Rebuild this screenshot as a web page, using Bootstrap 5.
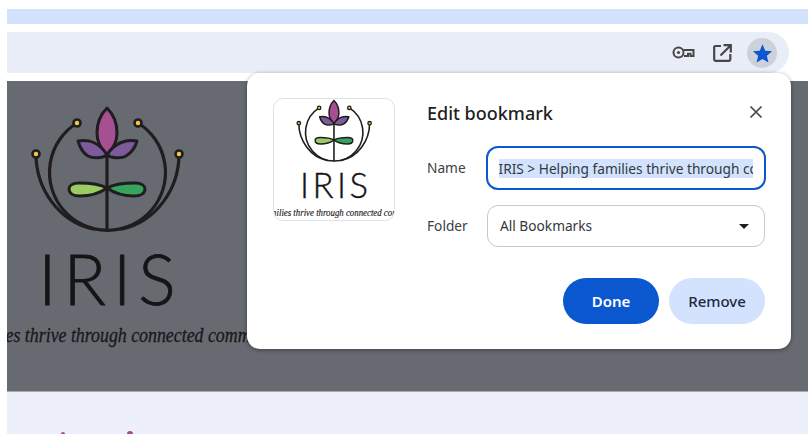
<!DOCTYPE html>
<html lang="en">
<head>
<meta charset="utf-8">
<title>Edit bookmark</title>
<link href="https://cdn.jsdelivr.net/npm/bootstrap@5.3.0/dist/css/bootstrap.min.css" rel="stylesheet">
<style>
html,body{height:441px;overflow:hidden;background:#fff;margin:0}
body{font-family:"Noto Sans","Open Sans",sans-serif;color:#1f1f1f}
.shot{position:relative;width:808px;height:441px;padding:9px 0 0 7px;overflow:hidden}
.tabstrip{height:15px;background:#d3e3fd}
.urlbar{height:41px;margin-top:8px;margin-right:19px;background:#e9edf7;border-radius:0 21px 21px 0;padding-right:12px;gap:18px}
.tool{color:#474747;display:block}
.starbtn{width:30px;height:30px;border-radius:50%;background:#cdd1d9;margin-left:-3px}
.hero{height:311px;margin-top:8px;background:#676a71;border-bottom:1px solid #a9abb0;overflow:hidden}
.hero svg{display:block}
.below{height:42px;background:#edf0fa;overflow:hidden;position:relative}
.inkdot{position:absolute;background:#a8488f;border-radius:2px 2px 0 0}
.inkdot.one{left:54px;top:40px;width:4px;height:2px}
.inkdot.two{left:120px;top:39px;width:6px;height:3px;border-radius:3px 3px 0 0}
.dialog{position:absolute;left:247px;top:73px;width:544px;height:276px;background:#fff;border-radius:13px;box-shadow:0 1px 4px rgba(0,0,0,.4);padding:25px 25px 25px 26px}
.thumb{width:122px;height:123px;border:1px solid #e0e1e4;border-radius:10px;overflow:hidden;flex:none;margin-right:32px}
.thumb svg{display:block}
.dlgtitle{font-size:18px;font-weight:500;line-height:24px;color:#1f1f1f}
.closebtn{width:16px;height:16px;color:#474747;line-height:0;margin-right:1px}
.fieldlabel{width:59px;font-size:13.7px;color:#3c4043;flex:none}
.namebox{width:280px;height:44px;border:2.5px solid #0b57d0;border-radius:12px;padding:0 10.500px;font-size:13.7px;display:flex;align-items:center;overflow:hidden;white-space:nowrap}
.namesel{display:block;width:254px;height:19px;line-height:19px;background:#d3e3fd;overflow:hidden;color:#33383f}
.folderbox{width:278px;height:42px;border:1.5px solid #c7c9cc;border-radius:11px;padding:0 15px 0 12px;font-size:13.7px;color:#33383f;margin-left:1px}
.caret-dn{width:0;height:0;border-left:5px solid transparent;border-right:5px solid transparent;border-top:5px solid #1f1f1f}
.pillbtn{width:96px;height:46px;border-radius:23px;border:0;font-size:15px;font-weight:600;padding:0}
.pillbtn.primary-pill,.pillbtn.primary-pill:hover{background:#0b57d0;color:#fff}
.pillbtn.soft-pill,.pillbtn.soft-pill:hover{background:#d3e3fd;color:#1f2a44;font-weight:500}
.btnrow{margin-top:31px;margin-right:1px;gap:10px}
.titlerow{margin-top:3px;height:24px}
.namerow{margin-top:21px}
.folderrow{margin-top:15px}
</style>
</head>
<body>
<svg width="0" height="0" class="d-block position-absolute">
  <defs>
    <symbol id="lotus" viewBox="0 0 808 441" overflow="visible">
      <g fill="none" stroke="#1f1d1f" stroke-width="3.2" stroke-linecap="round">
        <path d="M77 123A58 58 0 1 0 138 123"/>
        <path d="M36 154C36 190 60 222 93 229"/>
        <path d="M179 154C179 190 155 222 122 229"/>
        <path d="M107 155V230"/>
      </g>
      <g stroke="#1f1d1f" stroke-width="3" stroke-linejoin="round">
        <path fill="#a64f92" d="M107 108C100 115 97 124 97 133C97 143 102 150 107 155C112 150 117 143 117 133C117 124 114 115 107 108Z"/>
        <path fill="#7e5a9c" d="M78 141C89 139 100 143 107 155C103 158 93 159 88 156C83 153 80 148 78 141Z"/>
        <path fill="#7e5a9c" d="M137 141C126 139 114 143 107 155C111 158 121 159 126 156C131 153 135 148 137 141Z"/>
        <path fill="#9ccb64" d="M107 188C100 184 90 183 79 183C72 183 69 186 69 189C69 193 73 196 80 196C90 196 100 193 107 188Z"/>
        <path fill="#38a35e" d="M107 188C114 184 124 183 135 183C142 183 145 186 145 189C145 193 141 196 134 196C124 196 114 193 107 188Z"/>
      </g>
      <g fill="#f4c93f" stroke="#1f1d1f" stroke-width="2.6">
        <circle cx="77" cy="123" r="3.500"/><circle cx="138" cy="123" r="3.500"/>
        <circle cx="36" cy="154" r="3.500"/><circle cx="179" cy="154" r="3.500"/>
      </g>
      <text x="110.500" y="305" text-anchor="middle" font-family="Lato, sans-serif" font-weight="300" font-size="70" letter-spacing="7" stroke="#151416" stroke-width=".8" fill="#151416">IRIS</text>
      <text transform="translate(131 342) scale(.85 1)" text-anchor="middle" font-family="'Liberation Serif', serif" font-style="italic" font-size="21" stroke="#191719" stroke-width=".3" fill="#191719">families thrive through connected communities</text>
    </symbol>
  </defs>
</svg>
<div class="shot">
  <div class="tabstrip"></div>
  <div class="urlbar d-flex align-items-center justify-content-end">
    <svg class="tool" width="23" height="13" viewBox="0 0 23 13" fill="none" stroke="currentColor" stroke-width="2"><circle cx="6.500" cy="6.500" r="5"/><circle cx="6.500" cy="6.500" r="1.600" fill="currentColor" stroke="none"/><path d="M11.500 4H21.500V10H18.500V7.800H16V10H12"/></svg>
    <svg class="tool" width="19" height="18" viewBox="0 0 19 18" fill="none" stroke="currentColor" stroke-width="2.200"><path d="M8 2H2.500A1.300 1.300 0 0 0 1.200 3.300V15.500A1.300 1.300 0 0 0 2.500 16.800H16A1.300 1.300 0 0 0 17.300 15.500V10"/><path d="M7.500 11.500 17.300 1.700M10.500 1.200H17.800V8.500"/></svg>
    <div class="starbtn d-flex align-items-center justify-content-center">
      <svg width="21" height="20" viewBox="0 0 24 23"><path fill="#0b57d0" d="M12 1.500l3.100 7.300 7.900.7-6 5.200 1.800 7.800L12 18.300 5.200 22.500 7 14.700 1 9.500l7.900-.7z"/></svg>
    </div>
  </div>
  <div class="hero">
    <svg width="801" height="310" viewBox="7 81 801 310"><use href="#lotus" width="808" height="441"/></svg>
  </div>
  <div class="below"><span class="inkdot one"></span><span class="inkdot two"></span></div>
  <div class="dialog d-flex">
    <div class="thumb">
      <svg width="120" height="121" viewBox="274 99 120 121"><g transform="translate(281 47) scale(.495)"><use href="#lotus" width="808" height="441"/></g></svg>
    </div>
    <div class="flex-grow-1">
      <div class="d-flex align-items-center justify-content-between titlerow">
        <div class="dlgtitle">Edit bookmark</div>
        <div class="closebtn"><svg width="14" height="14" viewBox="0 0 14 14" stroke="currentColor" stroke-width="1.700"><path d="M1.500 1.500l11 11M12.500 1.500l-11 11"/></svg></div>
      </div>
      <div class="d-flex align-items-center namerow">
        <div class="fieldlabel">Name</div>
        <div class="namebox"><span class="namesel">IRIS &gt; Helping families thrive through connected communities</span></div>
      </div>
      <div class="d-flex align-items-center folderrow">
        <div class="fieldlabel">Folder</div>
        <div class="folderbox d-flex align-items-center justify-content-between"><span>All Bookmarks</span><span class="caret-dn"></span></div>
      </div>
      <div class="d-flex justify-content-end btnrow">
        <button class="pillbtn primary-pill btn">Done</button>
        <button class="pillbtn soft-pill btn">Remove</button>
      </div>
    </div>
  </div>
</div>
<script src="https://cdn.jsdelivr.net/npm/bootstrap@5.3.0/dist/js/bootstrap.bundle.min.js"></script>
</body>
</html>
